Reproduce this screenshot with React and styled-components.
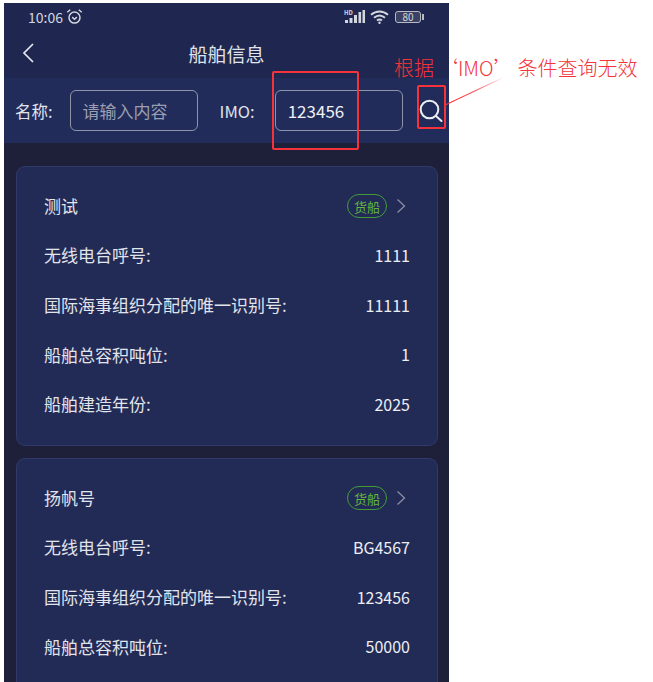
import React from "react";
import styled, { createGlobalStyle } from "styled-components";

const GlobalStyle = createGlobalStyle`
  html, body {
    margin: 0;
    background: #ffffff;
  }
  body {
    font-family: "Noto Sans CJK SC", "Noto Sans", sans-serif;
  }
`;

const Page = styled.div`
  position: relative;
  width: 653px;
  height: 682px;
  overflow: hidden;
  background: #ffffff;
  padding: 3px 0 0 4px;
  box-sizing: border-box;
`;

const Phone = styled.div`
  width: 445px;
  height: 679px;
  overflow: hidden;
  background: #1e1f38;
  color: #e6e8f0;
`;

const Top = styled.div`
  height: 75px;
  background: #1f2750;
`;

const StatusBar = styled.div`
  height: 27px;
  padding: 0 28px 0 24px;
  display: flex;
  align-items: center;
  justify-content: space-between;
  font-size: 14px;
  color: #d4d6df;
`;

const Group = styled.div`
  display: flex;
  align-items: center;
  gap: ${(p) => p.$gap || 3}px;
`;

const NavBar = styled.div`
  position: relative;
  height: 46px;
  display: flex;
  align-items: center;
  justify-content: center;
  font-size: 19px;
  color: #e1e3ea;

  svg {
    position: absolute;
    left: 18px;
    top: 13px;
  }
`;

const SearchBar = styled.div`
  height: 65px;
  background: #222c5a;
  display: flex;
  align-items: center;
  padding-left: 11px;
  font-size: 16.5px;
  color: #e0e2ea;
`;

const Field = styled.div`
  width: 128px;
  height: 41px;
  box-sizing: border-box;
  margin: 0 ${(p) => p.$right}px 0 ${(p) => p.$left}px;
  padding-left: 12px;
  display: flex;
  align-items: center;
  border: 1px solid #8f94aa;
  border-radius: 6px;
  font-size: 17px;
  color: ${(p) => (p.$muted ? "#9a9eb2" : "#eef0f5")};
`;

const List = styled.div`
  padding: 23px 11px 0 12px;
  display: flex;
  flex-direction: column;
  gap: 12px;
`;

const Card = styled.div`
  height: 280px;
  flex: none;
  box-sizing: border-box;
  padding: 13px 27px 0;
  background: #222b56;
  border: 1px solid #2f3a6a;
  border-radius: 9px;
`;

const Row = styled.div`
  height: ${(p) => p.$height || 49.7}px;
  display: flex;
  align-items: center;
  justify-content: space-between;
  font-size: 17px;
  color: #e2e4ec;
`;

const Value = styled.span`
  font-size: 16px;
  color: #eceef4;
`;

const Tag = styled.span`
  width: 40px;
  height: 24px;
  box-sizing: border-box;
  border: 1px solid #439c38;
  border-radius: 12px;
  display: flex;
  align-items: center;
  justify-content: center;
  font-size: 13px;
  color: #62b93c;
`;

const TagGroup = styled.div`
  display: flex;
  align-items: center;
  gap: 9px;
  margin: 2px 4px 0 0;
`;

const Mark = styled.div`
  position: absolute;
  left: ${(p) => p.$x}px;
  top: ${(p) => p.$y}px;
  width: ${(p) => p.$w}px;
  height: ${(p) => p.$h}px;
  box-sizing: border-box;
  border: 2px solid #f4333a;
  border-radius: 2px;
`;

const Note = styled.div`
  position: absolute;
  left: 394px;
  top: 54px;
  font-size: 20px;
  line-height: 28px;
  font-weight: 300;
  word-spacing: -0.5px;
  color: #f4333a;
  white-space: pre;
`;

const Leader = styled.svg`
  position: absolute;
  left: 445px;
  top: 74px;
`;

const Alarm = () => (
  <svg width="17" height="17" viewBox="0 0 16 16" fill="none" stroke="#d4d6df" strokeWidth="1.4">
    <circle cx="8" cy="9" r="5.2" />
    <path d="M5.8 8.6 8 10.6l2.2-2" />
    <path d="M1.2 4 4 1.6M14.8 4 12 1.6" />
  </svg>
);

const Signal = () => (
  <svg width="21" height="15" viewBox="0 0 21 15" fill="#d4d6df">
    <rect x="1" y="11" width="3" height="3" />
    <rect x="5.5" y="9" width="3" height="5" />
    <rect x="10" y="6" width="3" height="8" />
    <rect x="14.5" y="3" width="2.6" height="11" />
    <rect x="18.5" y="1" width="2.5" height="13" />
    <text x="0" y="6" fontSize="6" fontWeight="700">HD</text>
  </svg>
);

const Wifi = () => (
  <svg width="20" height="16" viewBox="0 0 20 15" fill="none" stroke="#d4d6df" strokeWidth="2">
    <path d="M1 5.2C6 .8 13 .8 18 5.2" />
    <path d="M4 8.2c3.4-2.8 7.600-2.800 11 0" />
    <path d="M7 11c1.600-1.200 3.400-1.200 5 0" />
    <circle cx="9.500" cy="13.200" r="1.200" fill="#d4d6df" stroke="none" />
  </svg>
);

const BatteryBox = styled.span`
  width: 26px;
  height: 12px;
  box-sizing: border-box;
  border: 1px solid #b8bac6;
  border-radius: 3px;
  background: #3b4163;
  font-size: 10px;
  line-height: 10px;
  text-align: center;
  color: #d4d6df;
  position: relative;

  &::after {
    content: "";
    position: absolute;
    right: -4px;
    top: 2px;
    width: 2px;
    height: 6px;
    background: #b8bac6;
  }
`;

const Back = () => (
  <svg width="13" height="20" viewBox="0 0 13 20" fill="none" stroke="#e6e8f0" strokeWidth="1.7">
    <path d="M11 1 2 10l9 9" />
  </svg>
);

const Search = () => (
  <svg width="24" height="24" viewBox="0 0 24 24" fill="none" stroke="#eceef4" strokeWidth="2">
    <circle cx="10.500" cy="10.500" r="8.800" />
    <path d="m17 17 5.500 5" strokeLinecap="round" />
  </svg>
);

const Chevron = () => (
  <svg width="10" height="16" viewBox="0 0 10 16" fill="none" stroke="#8a8ea4" strokeWidth="1.300">
    <path d="m1.500 1.500 7 6.500-7 6.500" />
  </svg>
);

const ships = [
  {
    name: "测试",
    rows: [
      ["无线电台呼号:", "1111"],
      ["国际海事组织分配的唯一识别号:", "11111"],
      ["船舶总容积吨位:", "1"],
      ["船舶建造年份:", "2025"],
    ],
  },
  {
    name: "扬帆号",
    rows: [
      ["无线电台呼号:", "BG4567"],
      ["国际海事组织分配的唯一识别号:", "123456"],
      ["船舶总容积吨位:", "50000"],
    ],
  },
];

const App = () => {
  return (
    <Page>
      <GlobalStyle />
      <Phone>
        <Top>
          <StatusBar>
            <Group>
              10:06 <Alarm />
            </Group>
            <Group $gap={5}>
              <Signal />
              <Wifi />
              <BatteryBox>80</BatteryBox>
            </Group>
          </StatusBar>
          <NavBar>
            <Back />
            船舶信息
          </NavBar>
        </Top>
        <SearchBar>
          名称:
          <Field $muted $left={17} $right={22}>请输入内容</Field>
          IMO:
          <Field $left={20} $right={16}>123456</Field>
          <Search />
        </SearchBar>
        <List>
          {ships.map((ship) => (
            <Card key={ship.name}>
              <Row $height={50}>
                {ship.name}
                <TagGroup>
                  <Tag>货船</Tag>
                  <Chevron />
                </TagGroup>
              </Row>
              {ship.rows.map(([label, value]) => (
                <Row key={label}>
                  <span>{label}</span>
                  <Value>{value}</Value>
                </Row>
              ))}
            </Card>
          ))}
        </List>
      </Phone>
      <Mark $x={272} $y={71} $w={87} $h={79} />
      <Mark $x={417} $y={85} $w={29} $h={44} />
      <Note>根据 ‘IMO’ 条件查询无效</Note>
      <Leader width="60" height="32" viewBox="0 0 60 32">
        <defs>
          <linearGradient id="fade" x1="0" y1="1" x2="1" y2="0">
            <stop offset="0" stopColor="#f4333a" />
            <stop offset="0.5" stopColor="#f4333a" stopOpacity="0.8" />
            <stop offset="1" stopColor="#f4333a" stopOpacity="0" />
          </linearGradient>
        </defs>
        <polygon points="1,30 58,3 58,4.300 1,31.300" fill="url(#fade)" />
      </Leader>
    </Page>
  );
};

export default App;
